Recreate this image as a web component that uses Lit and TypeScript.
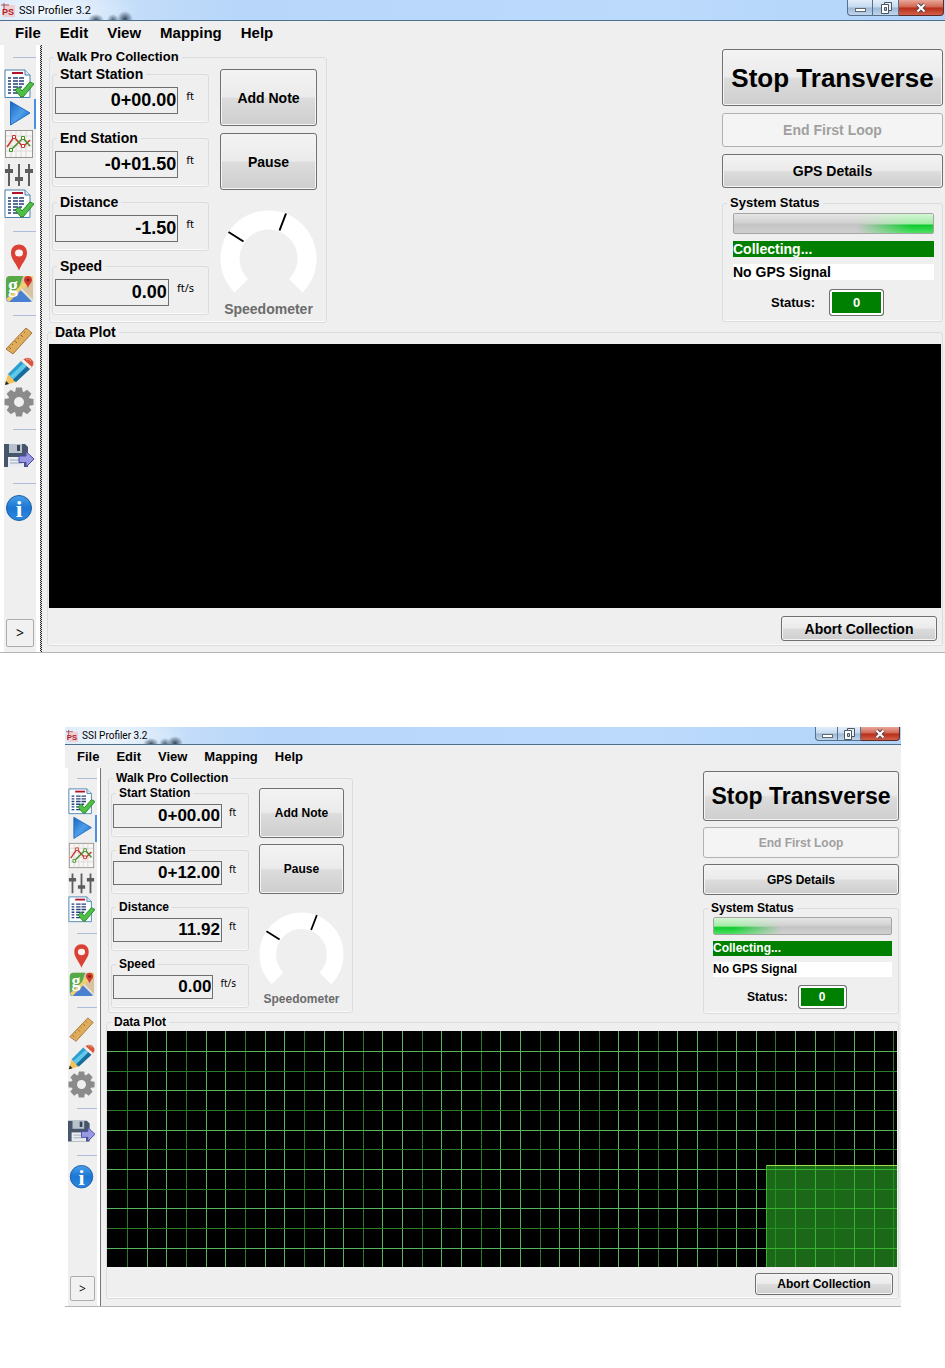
import { LitElement, html, css, svg, nothing } from "lit";
import { customElement, property } from "lit/decorators.js";
import { classMap } from "lit/directives/class-map.js";

interface Reading {
	id: string;
	label: string;
	value: string;
	unit: string;
}

interface Tool {
	name: string;
	icon: keyof typeof icons;
	active?: boolean;
}

const reportIcon = svg`
	<path d="M1 1H21L26 6V28.500H1Z" fill="#fbfdff" stroke="#4b83ad" />
	<path d="M21 1V6H26" fill="#dcebf5" stroke="#4b83ad" />
	<path d="M8 4H19" stroke="#b3122c" stroke-width="2" />
	<path d="M4 9H7M4 12H7M4 15H7M4 18H7M4 21H7M4 24H7" stroke="#26407a" stroke-width="1.500" />
	<path d="M9 9H21M9 12H21M9 15H21M9 18H18M9 21H14M9 24H14" stroke="#26407a" stroke-width="1.500" stroke-dasharray="5 1" />
	<path d="M11 21L15 18L18 22L26 13L30 15L19 28H17Z" fill="#4fbf45" stroke="#23872a" />
`;

const icons = {
	report: reportIcon,
	play: svg`
		<defs>
			<linearGradient id="play-fill" x1="0" y1="0" x2="1" y2="1">
				<stop offset="0" stop-color="#1763bd" />
				<stop offset="0.500" stop-color="#4f9eea" />
				<stop offset="1" stop-color="#1a66c2" />
			</linearGradient>
		</defs>
		<path d="M6.500 2.500L26 14L6.500 26Z" fill="url(#play-fill)" stroke="#1f6cc4" stroke-linejoin="round" />
	`,
	chart: svg`
		<rect x="1.500" y="1.500" width="27" height="27" fill="#f7f6f4" stroke="#999492" />
		<path d="M7 2V28M12 2V28M17 2V28M22 2V28M2 7H28M2 12H28M2 17H28M2 22H28" stroke="#dcd8d8" />
		<path d="M3 18L10 8L19 18L26 11" fill="none" stroke="#c8352a" stroke-width="1.500" />
		<path d="M7 21L19 9L26 17" fill="none" stroke="#3f9025" stroke-width="1.500" />
		<path d="M8.500 6.500h3v3h-3zM17.500 15.500h3v3h-3z" fill="#fff" stroke="#c8352a" />
		<path d="M5.500 19.500h3v3h-3zM17.500 7.500h3v3h-3z" fill="#fff" stroke="#3f9025" />
	`,
	sliders: svg`
		<path d="M5 5V27M15 5V27M25 5V27" stroke="#5e5e5e" stroke-width="2" />
		<path d="M1 10H9V14H1ZM11 18H19V22H11ZM21 10H29V14H21Z" fill="#5c5c5c" />
	`,
	pin: svg`
		<path d="M15 1.500C10 1.500 7 5 7 10C7 16 12 20 15 27.500C18 20 23 16 23 10C23 5 20 1.500 15 1.500Z" fill="#dc4135" />
		<ellipse cx="15" cy="10" rx="4" ry="3.500" fill="#fbf3f1" />
	`,
	maps: svg`
		<rect x="2" y="3" width="27" height="26" rx="4" fill="#d8c3a0" />
		<path d="M6 3H19L15 15L2 25V7Q2 3 6 3Z" fill="#57a947" />
		<path d="M2 25L15 14L29 27Q28 29 25 29H6Q2 29 2 25Z" fill="#4a80d0" />
		<path d="M24 3L15 14L2 26L5 29L17 17L29 8V3Z" fill="#f0d06c" />
		<path d="M17 16L29 28" stroke="#e9e4d8" stroke-width="2" />
		<text x="4" y="19" class="map-letter">g</text>
		<path d="M24 3C21 3 20 5 20 7C20 10 23 11 24 15C25 11 28 10 28 7C28 5 27 3 24 3Z" fill="#d23c31" />
		<circle cx="24" cy="7" r="1.500" fill="#7c211c" />
	`,
	ruler: svg`
		<path d="M2 22L22 1L28 6L9 27Z" fill="#dfac5c" stroke="#a3783c" />
		<path d="M5 20L7 22M8 17L9 18M11 14L13 16M14 11L15 12M17 8L19 10M20 5L21 6" stroke="#8f682f" />
	`,
	pencil: svg`
		<path d="M1 28L4 17L12 25Z" fill="#f2c25a" />
		<path d="M1 28L2 24L5 27Z" fill="#222" />
		<path d="M4 17L17 4L26 12L12 25Z" fill="#2b9fd0" />
		<path d="M6 19L20 6L23 9L9 22Z" fill="#62c8ea" />
		<path d="M9 23L12 25L26 12L23 9Z" fill="#176c9c" />
		<path d="M20 2Q25 -1 28 3Q31 6 28 10L26 12L17 4Z" fill="#d8573f" />
		<path d="M17 4L19 2L28 10L26 12Z" fill="#f5efe9" />
		<path d="M22 2Q25 1 27 4" fill="none" stroke="#f0a18f" />
	`,
	gear: svg`
		${[0, 45, 90, 135, 180, 225, 270, 315].map(
			(angle) => svg`<path d="M11 6L12 0.500H18L19 6Z" fill="#8b8b8b" transform="rotate(${angle} 15 15)" />`
		)}
		<circle cx="15" cy="15" r="8" fill="none" stroke="#8b8b8b" stroke-width="6" />
	`,
	save: svg`
		<path d="M0 3H21L24 6V26H0Z" fill="#47566b" />
		<path d="M5 3H18V12H5Z" fill="#b9c2cc" />
		<path d="M13 4H16V10H13Z" fill="#38465a" />
		<path d="M4 16H20V26H4Z" fill="#e9edf1" />
		<path d="M6 19H18M6 22H18" stroke="#9aa5b3" />
		<path d="M15 15H22V10.500L30 18L22 26V21.500H15Z" fill="#9799e2" stroke="#4a4aa6" />
	`,
	info: svg`
		<defs>
			<linearGradient id="info-fill" x1="0" y1="0" x2="0" y2="1">
				<stop offset="0" stop-color="#4aa0ea" />
				<stop offset="0.500" stop-color="#1c76d2" />
				<stop offset="1" stop-color="#2c8be2" />
			</linearGradient>
		</defs>
		<circle cx="15" cy="13" r="12.500" fill="url(#info-fill)" stroke="#1a5ea8" />
		<text x="15" y="22" class="info-letter">i</text>
	`
};

const tools: Tool[][] = [
	[
		{ name: "Collection report", icon: "report" },
		{ name: "Collect", icon: "play", active: true },
		{ name: "Chart", icon: "chart" },
		{ name: "Adjustments", icon: "sliders" },
		{ name: "Final report", icon: "report" }
	],
	[
		{ name: "Location", icon: "pin" },
		{ name: "Map", icon: "maps" }
	],
	[
		{ name: "Measure", icon: "ruler" },
		{ name: "Edit", icon: "pencil" },
		{ name: "Settings", icon: "gear" }
	],
	[{ name: "Save and export", icon: "save" }],
	[{ name: "About", icon: "info" }]
];

const menus = ["File", "Edit", "View", "Mapping", "Help"];

@customElement("data-plot")
export class DataPlot extends LitElement {
	static override styles = css`
		:host {
			background: #000;
			display: block;
		}

		svg {
			display: block;
			height: 100%;
			width: 100%;
		}

		.line { stroke: #58b458 }
		.line.dim { stroke: #2b7a2b }
		.area { fill: #1a6818 }
		.area-line { stroke: #37b52f }
		.area-line.dim { stroke: #249324 }
		.edge { fill: none; stroke: #9be04a }
	`;

	@property({ type: Boolean })
	grid = false;

	// where the trace begins, in plot units
	private traceX = 659;
	private traceY = 134;

	private lines(count: number, tone: string, vertical: boolean) {
		return Array.from({ length: count }, (_, i) => {
			const at = Math.round(20 + i * 19.65) + 0.5;
			const names = classMap({ [tone]: true, dim: vertical ? i % 3 === 0 : i % 2 === 1 });
			const clipX = tone === "line" ? 0 : this.traceX;
			const clipY = tone === "line" ? 0 : this.traceY;

			if (vertical) {
				return at < clipX ? nothing : svg`<path class="${names}" d="M${at} ${clipY}V236" />`;
			}

			return at < clipY ? nothing : svg`<path class="${names}" d="M${clipX} ${at}H790" />`;
		});
	}

	override render() {
		if (!this.grid) return nothing;

		return html`
			<svg viewBox="0 0 790 236" preserveAspectRatio="none" role="img" aria-label="Data plot">
				${this.lines(40, "line", true)} ${this.lines(11, "line", false)}
				<rect class="area" x="${this.traceX}" y="${this.traceY}" width="131" height="102" />
				${this.lines(40, "area-line", true)} ${this.lines(11, "area-line", false)}
				<path class="edge" d="M${this.traceX} ${this.traceY + 0.5}H790" />
				<path class="area-line" d="M${this.traceX + 0.5} ${this.traceY}V236" />
			</svg>
		`;
	}
}

@customElement("profiler-window")
export class ProfilerWindow extends LitElement {
	static override styles = css`
		:host {
			--title-height: 21px;
			--title-size: 11px;
			--title-icon: 14px;
			--caption-height: 16px;
			--caption-width: 26px;
			--close-width: 45px;
			--menu-height: 24px;
			--menu-size: 15px;
			--menu-gap: 19px;
			--menu-start: 15px;
			--slot: 30px;
			--separator: 24px;
			--expand: 28px;
			--margin: 4px;
			--divider: repeating-conic-gradient(#222 0 25%, #ddd 0 50%) 0 0 / 2px 2px;
			--divider-width: 2px;
			--line: 16px;
			--text: 14px;
			--text-group: 13px;
			--text-value: 18px;
			--text-unit: 11px;
			--text-primary: 26px;
			--gap: 7px;
			--top: 4px;
			--field-width: 157px;
			--field-height: 27px;
			--field-top: 5px;
			--field-inset: 2px;
			--field-end: 14px;
			--unit-gap: 8px;
			--big-button: 57px;
			--button: 34px;
			--small-button: 25px;
			--action-width: 97px;
			--action-gap: 11px;
			--action-top: 3px;
			--action-end: 9px;
			--gauge-top: 20px;
			--panel-end: 5px;
			--side-width: 221px;
			--side-start: 10px;
			--side-end: 8px;
			--progress: 21px;
			--band: 16px;
			--status-start: 38px;
			--status-gap: 14px;
			--status-width: 55px;
			--plot-height: 264px;
			--plot-top: 4px;
			--abort-width: 156px;
			--abort-top: 8px;
			--foot: 6px;
			background: #efefef;
			border-bottom: 1px solid #b4b4b4;
			color: #000;
			display: flex;
			flex-direction: column;
			font-family: "Liberation Sans", Arial, sans-serif;
			font-size: var(--text);
			font-weight: bold;
			line-height: var(--line);
		}

		:host([compact]) {
			--title-height: 18px;
			--title-size: 10px;
			--title-icon: 12px;
			--caption-height: 14px;
			--caption-width: 23px;
			--close-width: 39px;
			--menu-height: 23px;
			--menu-size: 13px;
			--menu-gap: 17px;
			--menu-start: 12px;
			--slot: 27px;
			--separator: 20px;
			--expand: 25px;
			--margin: 3px;
			--divider: #777;
			--divider-width: 1px;
			--line: 14px;
			--text: 12px;
			--text-group: 12px;
			--text-value: 17px;
			--text-unit: 10px;
			--text-primary: 23px;
			--gap: 6px;
			--top: 3px;
			--field-width: 138px;
			--field-height: 24px;
			--field-top: 4px;
			--field-inset: 1px;
			--field-end: 12px;
			--unit-gap: 7px;
			--big-button: 50px;
			--button: 31px;
			--small-button: 22px;
			--action-width: 85px;
			--action-gap: 10px;
			--action-top: 2px;
			--action-end: 8px;
			--gauge-top: 18px;
			--panel-end: 4px;
			--side-width: 196px;
			--side-start: 9px;
			--side-end: 6px;
			--progress: 18px;
			--band: 15px;
			--status-start: 34px;
			--status-gap: 10px;
			--status-width: 49px;
			--plot-height: 236px;
			--plot-top: 2px;
			--abort-width: 138px;
			--abort-top: 6px;
			--foot: 7px;
		}

		* { box-sizing: border-box }

		button {
			color: inherit;
			font: inherit;
			margin: 0;
			padding: 0;
		}

		.titlebar {
			align-items: center;
			background:
				radial-gradient(ellipse 8px 6px at 96px 100%, #3e5064, transparent),
				radial-gradient(ellipse 6px 6px at 113px 100%, #4e6278, transparent),
				radial-gradient(ellipse 8px 8px at 125px 95%, #34475b, transparent),
				radial-gradient(ellipse 90px 26px at 50px 50%, #f2f8fe, transparent),
				linear-gradient(to right, #d3e5f8, #b7d6fa 25%, #bbdafc 70%, #b2d3f8);
			border-bottom: 1px solid #4c708f;
			display: flex;
			height: var(--title-height);
		}

		:host([compact]) .titlebar {
			background:
				radial-gradient(ellipse 8px 6px at 86px 100%, #3e5064, transparent),
				radial-gradient(ellipse 6px 6px at 100px 100%, #4e6278, transparent),
				radial-gradient(ellipse 8px 7px at 110px 95%, #34475b, transparent),
				radial-gradient(ellipse 80px 24px at 45px 50%, #f2f8fe, transparent),
				linear-gradient(to right, #d3e5f8, #b7d6fa 25%, #bbdafc 70%, #b2d3f8);
		}

		.app-icon {
			height: var(--title-icon);
			margin: 0 4px 0 1px;
			width: var(--title-icon);
		}

		.app-icon text {
			fill: #b3202c;
			font: bold 9px "Liberation Sans", sans-serif;
		}

		.title {
			flex: 1;
			font: normal var(--title-size) Roboto, "Noto Sans", sans-serif;
			margin: 0;
		}

		.captions {
			align-self: flex-start;
			display: flex;
			margin-right: 1px;
		}

		.caption {
			background: linear-gradient(#e2eefb, #c5d9ee 48%, #9db8d4 52%, #bfd5ec);
			border: 1px solid #54708c;
			border-top: 0;
			border-left-width: 0;
			display: grid;
			height: var(--caption-height);
			place-items: center;
			width: var(--caption-width);
		}

		.caption:first-child {
			border-bottom-left-radius: 4px;
			border-left-width: 1px;
		}

		.caption.close {
			background: linear-gradient(#e8a79b, #d0644f 48%, #b52c17 52%, #d4604a);
			border-bottom-right-radius: 4px;
			border-color: #5c2a2a;
			width: var(--close-width);
		}

		.caption svg { height: 12px; width: 14px }

		.menubar {
			display: flex;
			font-size: var(--menu-size);
			gap: var(--menu-gap);
			height: var(--menu-height);
			padding-left: var(--menu-start);
		}

		.menu {
			background: none;
			border: 0;
		}

		.body {
			display: flex;
			flex: 1;
		}

		.sidebar {
			background: #fff;
			display: flex;
		}

		.sidebar::after {
			background: var(--divider);
			content: "";
			width: var(--divider-width);
		}

		.toolbar {
			background: #efefef;
			display: flex;
			flex-direction: column;
			margin: 0 var(--margin);
			padding-bottom: 5px;
		}

		.separator {
			align-items: center;
			display: flex;
			height: var(--separator);
			padding-left: 9px;
		}

		.separator::before {
			background: #aebeda;
			content: "";
			flex: 1;
			height: 1px;
		}

		.tool {
			background: none;
			border: 0;
			border-right: 2px solid transparent;
			display: block;
			height: var(--slot);
		}

		.tool.active { border-color: #4a90e2 }

		.tool svg {
			display: block;
			height: var(--slot);
			width: var(--slot);
		}

		.map-letter {
			fill: #fff;
			font: bold 20px "Liberation Serif", serif;
		}

		.info-letter {
			fill: #fff;
			font: bold 24px "Liberation Serif", serif;
			text-anchor: middle;
		}

		.expand {
			background: #f1f1f1;
			border: 1px solid #adadad;
			border-radius: 2px;
			font-family: "Open Sans", sans-serif;
			font-weight: normal;
			height: var(--expand);
			margin: auto 0 0 2px;
			width: var(--expand);
		}

		.main {
			display: flex;
			flex: 1;
			flex-direction: column;
			gap: 1px;
			min-width: 0;
			padding: var(--top) 2px var(--foot) 5px;
		}

		.upper {
			align-items: flex-start;
			display: flex;
			justify-content: space-between;
			padding-left: 2px;
		}

		fieldset {
			border: 1px solid #d9dde0;
			border-radius: 3px;
			box-shadow: inset 0 -1px #fafafa;
			margin: 0;
			min-width: 0;
			padding: 0;
		}

		legend {
			margin-left: 4px;
			padding: 0 3px;
		}

		legend label { display: block }

		.collection > legend, .system > legend { font-size: var(--text-group) }

		.collection-body {
			display: flex;
			gap: var(--action-gap);
			padding: 1px var(--action-end) var(--panel-end) 2px;
		}

		.readings {
			display: flex;
			flex-direction: column;
			gap: var(--gap);
			width: var(--field-width);
		}

		.reading {
			display: flex;
			gap: var(--unit-gap);
			padding: var(--field-top) var(--field-end) 8px var(--field-inset);
		}

		.value {
			background: #efefef;
			border: 1px solid #6f6f6f;
			border-radius: 0;
			color: #000;
			flex: 1;
			font: bold var(--text-value) "Liberation Sans", Arial, sans-serif;
			height: var(--field-height);
			min-width: 0;
			outline: 0;
			padding: 0 1px;
			text-align: right;
			width: 0;
		}

		.unit {
			font: normal var(--text-unit) "Noto Sans", "Open Sans", sans-serif;
			line-height: var(--line);
			padding-top: 1px;
		}

		.actions {
			display: flex;
			flex-direction: column;
			gap: var(--gap);
			padding-top: var(--action-top);
			width: var(--action-width);
		}

		.push {
			background: linear-gradient(#f3f3f3, #ebebeb 48%, #dcdcdc 52%, #cecece);
			border: 1px solid #707070;
			border-radius: 3px;
			box-shadow: inset 0 0 0 1px #f4f4f4;
			height: var(--button);
		}

		.push.big { height: var(--big-button) }
		.push.primary { font-size: var(--text-primary) }

		.push:disabled {
			background: #f4f4f4;
			border-color: #adb2b5;
			color: #a0a0a0;
		}

		.gauge {
			color: #6b6b6b;
			display: flex;
			flex-direction: column;
			gap: var(--gap);
			margin: calc(var(--gauge-top) - var(--gap)) 0 0;
			text-align: center;
		}

		.gauge svg { display: block; width: 100% }

		.side {
			display: flex;
			flex-direction: column;
			gap: var(--gap);
			width: var(--side-width);
		}

		.system-body {
			display: flex;
			flex-direction: column;
			gap: var(--gap);
			padding: 2px var(--side-end) var(--panel-end) var(--side-start);
		}

		.progress {
			background: linear-gradient(#e6e6e6, #d2d2d2 45%, #c4c4c4 55%, #d0d0d0);
			border: 1px solid #a5a5a5;
			border-radius: 2px;
			display: flex;
			height: var(--progress);
			justify-content: flex-end;
		}

		.progress.start { justify-content: flex-start }

		.glow {
			background: linear-gradient(#d4f6d4, #a2eca6 50%, #0fcb2e 60%, #4fe063);
			mask-image: linear-gradient(to right, transparent, #000 70%);
			width: 38%;
		}

		.start .glow { mask-image: linear-gradient(to left, transparent, #000 70%) }

		.band {
			height: var(--band);
			line-height: var(--band);
			margin: 0;
		}

		.band.collecting { background: #008000; color: #fff }
		.band.gps { background: #fff }

		.status {
			align-items: center;
			display: flex;
			font-size: var(--text-group);
			gap: var(--status-gap);
			padding: 2px 0 0 var(--status-start);
		}

		.code {
			background: #008000;
			border: 1px solid #707070;
			border-radius: 3px;
			box-shadow: inset 0 0 0 2px #fff;
			color: #fff;
			height: var(--field-height);
			line-height: calc(var(--field-height) - 2px);
			text-align: center;
			width: var(--status-width);
		}

		.plot-body {
			display: flex;
			flex-direction: column;
			padding: var(--plot-top) 1px 4px;
		}

		.plot { height: var(--plot-height) }

		.push.abort {
			align-self: flex-end;
			height: var(--small-button);
			margin: var(--abort-top) 4px 0 0;
			width: var(--abort-width);
		}

		:host([compact]) .plot-body { padding: var(--plot-top) 1px 3px 0 }
	`;

	@property({ type: Boolean, reflect: true })
	compact = false;

	@property({ attribute: false })
	readings: Reading[] = [];

	@property({ type: Boolean })
	plotted = false;

	@property()
	progress: "start" | "end" = "end";

	private renderTitleBar() {
		return html`
			<header class="titlebar">
				<svg class="app-icon" viewBox="0 0 14 14" aria-hidden="true">
					<rect x="2" y="2" width="12" height="12" fill="#eed0d2" />
					<path d="M0 2H8M3 0V6" stroke="#a85058" />
					<text x="1" y="12">PS</text>
				</svg>
				<h1 class="title">SSI Profiler 3.2</h1>
				<div class="captions">
					<button class="caption" aria-label="Minimize">
						<svg viewBox="0 0 14 12"><rect x="2.500" y="6.500" width="10" height="3" fill="#fff" stroke="#5d6876" /></svg>
					</button>
					<button class="caption" aria-label="Restore">
						<svg viewBox="0 0 14 12">
							<path d="M5.500 0.500H12.500V8.500H5.500Z" fill="#e8eef5" stroke="#4d5763" />
							<path d="M2.500 2.500H9.500V11.500H2.500Z" fill="#fff" stroke="#4d5763" />
							<path d="M5.500 5.500H7.500V8.500H5.500Z" fill="#b8cadd" stroke="#4d5763" />
						</svg>
					</button>
					<button class="caption close" aria-label="Close">
						<svg viewBox="0 0 14 12">
							<path d="M3.500 2.500L10.500 9.500M10.500 2.500L3.500 9.500" stroke="#5e4550" stroke-width="4" />
							<path d="M3.500 2.500L10.500 9.500M10.500 2.500L3.500 9.500" stroke="#fff" stroke-width="2" />
						</svg>
					</button>
				</div>
			</header>
		`;
	}

	private renderToolbar() {
		return html`
			<aside class="sidebar">
				<div class="toolbar" role="toolbar">
					${tools.map(
						(group) => html`
							<div class="separator"></div>
							${group.map(
								(tool) => html`
									<button class="${classMap({ tool: true, active: !!tool.active })}" aria-label="${tool.name}">
										<svg viewBox="0 0 30 30">${icons[tool.icon]}</svg>
									</button>
								`
							)}
						`
					)}
					<button class="expand">&gt;</button>
				</div>
			</aside>
		`;
	}

	private renderReading(reading: Reading) {
		return html`
			<fieldset>
				<legend><label for="${reading.id}">${reading.label}</label></legend>
				<div class="reading">
					<input class="value" id="${reading.id}" type="text" readonly .value="${reading.value}" />
					<span class="unit">${reading.unit}</span>
				</div>
			</fieldset>
		`;
	}

	private renderCollection() {
		return html`
			<fieldset class="collection">
				<legend>Walk Pro Collection</legend>
				<div class="collection-body">
					<div class="readings">${this.readings.map((reading) => this.renderReading(reading))}</div>
					<div class="actions">
						<button class="push big">Add Note</button>
						<button class="push big">Pause</button>
						<div class="gauge">
							<svg viewBox="0 0 97 84" aria-hidden="true">
								<path d="M21.300 75.700A38.500 38.500 0 1 1 75.700 75.700" fill="none" stroke="#fff" stroke-width="19" />
								<path d="M8.500 22L23.500 31.500M66 3.500L59.500 20.500" stroke="#000" stroke-width="2" />
							</svg>
							<span>Speedometer</span>
						</div>
					</div>
				</div>
			</fieldset>
		`;
	}

	private renderSide() {
		return html`
			<div class="side">
				<button class="push big primary">Stop Transverse</button>
				<button class="push" disabled>End First Loop</button>
				<button class="push">GPS Details</button>
				<fieldset class="system">
					<legend>System Status</legend>
					<div class="system-body">
						<div
							class="${classMap({ progress: true, start: this.progress === "start" })}"
							role="progressbar"
							aria-label="Collecting"
						>
							<div class="glow"></div>
						</div>
						<p class="band collecting">Collecting...</p>
						<p class="band gps">No GPS Signal</p>
						<div class="status">
							<label for="code">Status:</label>
							<output class="code" id="code">0</output>
						</div>
					</div>
				</fieldset>
			</div>
		`;
	}

	override render() {
		return html`
			${this.renderTitleBar()}
			<nav class="menubar">${menus.map((menu) => html`<button class="menu">${menu}</button>`)}</nav>
			<div class="body">
				${this.renderToolbar()}
				<main class="main">
					<div class="upper">${this.renderCollection()} ${this.renderSide()}</div>
					<fieldset>
						<legend>Data Plot</legend>
						<div class="plot-body">
							<data-plot class="plot" ?grid="${this.plotted}"></data-plot>
							<button class="push abort">Abort Collection</button>
						</div>
					</fieldset>
				</main>
			</div>
		`;
	}
}

@customElement("app-root")
export class AppRoot extends LitElement {
	static override styles = css`
		:host {
			background: #fff;
			display: flex;
			flex-direction: column;
			gap: 74px;
			padding-bottom: 61px;
		}

		.second { margin: 0 44px 0 65px }
	`;

	private first: Reading[] = [
		{ id: "start", label: "Start Station", value: "0+00.00", unit: "ft" },
		{ id: "end", label: "End Station", value: "-0+01.50", unit: "ft" },
		{ id: "distance", label: "Distance", value: "-1.50", unit: "ft" },
		{ id: "speed", label: "Speed", value: "0.00", unit: "ft/s" }
	];

	private second: Reading[] = [
		{ id: "start", label: "Start Station", value: "0+00.00", unit: "ft" },
		{ id: "end", label: "End Station", value: "0+12.00", unit: "ft" },
		{ id: "distance", label: "Distance", value: "11.92", unit: "ft" },
		{ id: "speed", label: "Speed", value: "0.00", unit: "ft/s" }
	];

	override render() {
		return html`
			<profiler-window .readings="${this.first}" progress="end"></profiler-window>
			<profiler-window class="second" compact plotted .readings="${this.second}" progress="start"></profiler-window>
		`;
	}
}
